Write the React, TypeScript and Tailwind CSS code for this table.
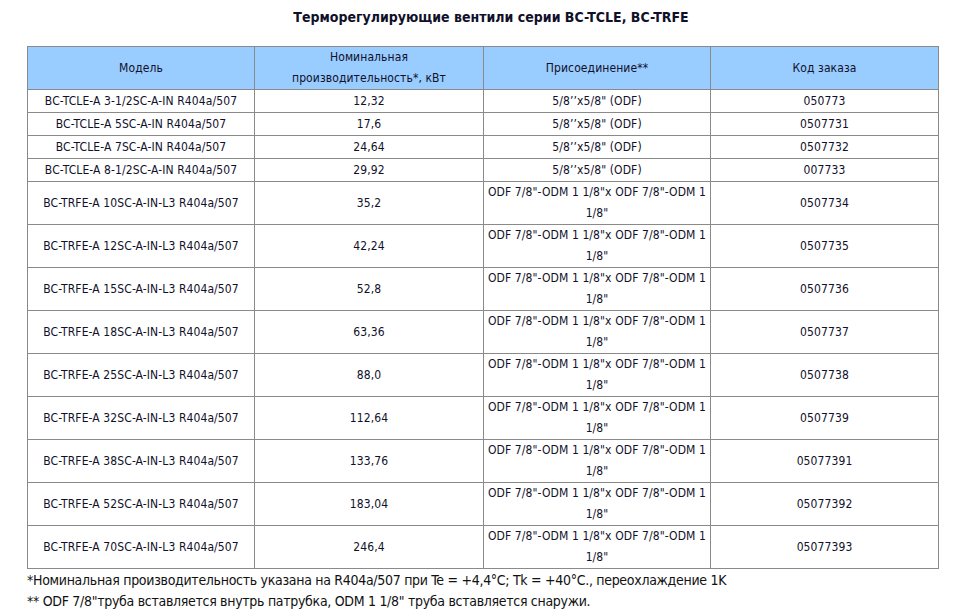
const rows: [string, string, string, string][] = [
  ['BC-TCLE-A 3-1/2SC-A-IN R404a/507', '12,32', '5/8’’x5/8" (ODF)', '050773'],
  ['BC-TCLE-A 5SC-A-IN R404a/507', '17,6', '5/8’’x5/8" (ODF)', '0507731'],
  ['BC-TCLE-A 7SC-A-IN R404a/507', '24,64', '5/8’’x5/8" (ODF)', '0507732'],
  ['BC-TCLE-A 8-1/2SC-A-IN R404a/507', '29,92', '5/8’’x5/8" (ODF)', '007733'],
  ['BC-TRFE-A 10SC-A-IN-L3 R404a/507', '35,2', '', '0507734'],
  ['BC-TRFE-A 12SC-A-IN-L3 R404a/507', '42,24', '', '0507735'],
  ['BC-TRFE-A 15SC-A-IN-L3 R404a/507', '52,8', '', '0507736'],
  ['BC-TRFE-A 18SC-A-IN-L3 R404a/507', '63,36', '', '0507737'],
  ['BC-TRFE-A 25SC-A-IN-L3 R404a/507', '88,0', '', '0507738'],
  ['BC-TRFE-A 32SC-A-IN-L3 R404a/507', '112,64', '', '0507739'],
  ['BC-TRFE-A 38SC-A-IN-L3 R404a/507', '133,76', '', '05077391'],
  ['BC-TRFE-A 52SC-A-IN-L3 R404a/507', '183,04', '', '05077392'],
  ['BC-TRFE-A 70SC-A-IN-L3 R404a/507', '246,4', '', '05077393'],
];

const cell = 'border border-[#8a8a8a] text-center align-middle px-0 py-0';

export default function App() {
  return (
    <div className="w-[955px] h-[615px] bg-white text-[#10102a] overflow-hidden font-['DejaVu_Sans_Condensed','DejaVu_Sans',sans-serif] [font-stretch:condensed]">
      <div className="pt-[8px] pl-[27px] text-center font-bold text-[14px] leading-[18px]">
        Терморегулирующие вентили серии BC-TCLE, BC-TRFE
      </div>
      <div className="pl-[27px] pt-[20px]">
        <table className="table-fixed border-collapse w-[911px] text-[12px] leading-[21px] tracking-[0.1px]">
          <colgroup>
            <col className="w-[227px]" />
            <col className="w-[229px]" />
            <col className="w-[227px]" />
            <col className="w-[228px]" />
          </colgroup>
          <thead>
            <tr className="bg-[#99ccff] h-[43px]">
              <th className={`${cell} font-normal`}>Модель</th>
              <th className={`${cell} font-normal`}>
                Номинальная
                <br />
                производительность*, кВт
              </th>
              <th className={`${cell} font-normal`}>Присоединение**</th>
              <th className={`${cell} font-normal`}>Код заказа</th>
            </tr>
          </thead>
          <tbody>
            {rows.map(r => (
              <tr key={r[0]} className={r[2] ? 'h-[23px]' : 'h-[43px]'}>
                <td className={cell}>{r[0]}</td>
                <td className={cell}>{r[1]}</td>
                <td className={cell}>
                  {r[2] || (
                    <>
                      ODF 7/8"-ODM 1 1/8"x ODF 7/8"-ODM 1
                      <br />
                      1/8"
                    </>
                  )}
                </td>
                <td className={cell}>{r[3]}</td>
              </tr>
            ))}
          </tbody>
        </table>
        <div className="pt-[1px] text-[14px] leading-[21px] tracking-[-0.3px] text-[#111]">
          <p>*Номинальная производительность указана на R404a/507 при Te = +4,4°C; Tk = +40°C., переохлаждение 1K</p>
          <p>** ODF 7/8"труба вставляется внутрь патрубка, ODM 1 1/8" труба вставляется снаружи.</p>
        </div>
      </div>
    </div>
  );
}
